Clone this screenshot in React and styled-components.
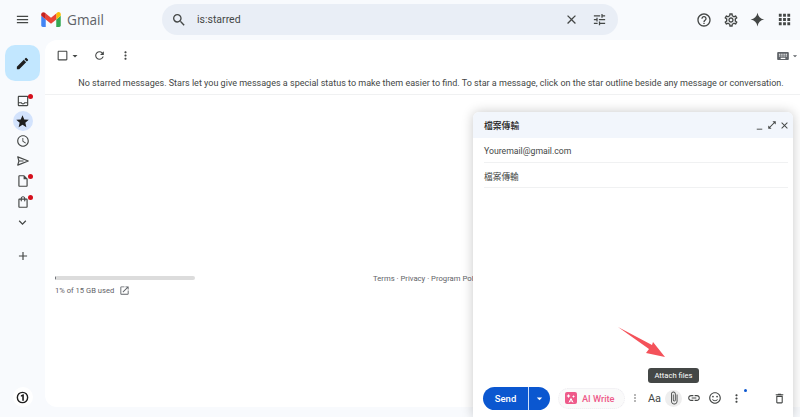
import React from 'react';
import styled, { createGlobalStyle } from 'styled-components';
import {
  MdMenu, MdSearch, MdClose, MdTune, MdOutlineHelpOutline, MdOutlineSettings, MdApps, MdEdit,
  MdOutlineInbox, MdStar, MdOutlineWatchLater, MdOutlineInsertDriveFile, MdExpandMore, MdAdd,
  MdCheckBoxOutlineBlank, MdArrowDropDown, MdRefresh, MdMoreVert, MdKeyboard, MdOutlineOpenInNew,
  MdOpenInFull, MdAttachFile, MdLink, MdOutlineSentimentSatisfied, MdOutlineDelete, MdOutlineShoppingBag, MdMinimize
} from 'react-icons/md';

const Global = createGlobalStyle`
  html, body { margin: 0; padding: 0; height: 100%; overflow: hidden; background: #f8fafd; }
  #root { height: 100%; }
  * { box-sizing: border-box; }
`;

const Page = styled.div`
  position: relative;
  width: 800px;
  height: 417px;
  overflow: hidden;
  display: flex;
  flex-direction: column;
  font-family: Roboto, "Noto Sans CJK TC", sans-serif;
  color: #444746;
  background: #f8fafd;
`;

const Header = styled.header`
  height: 40px;
  flex: none;
  display: flex;
  align-items: center;
  padding-bottom: 1px;
`;

const Brand = styled.div`
  width: 162px;
  flex: none;
  display: flex;
  align-items: center;
  padding-left: 15px;
  color: #444746;
`;

const Logo = styled.svg`
  width: 20px;
  height: 15px;
  margin-left: 11px;
`;

const Wordmark = styled.span`
  font-family: "Open Sans", Roboto, sans-serif;
  font-size: 13.6px;
  margin-left: 6px;
  color: #5f6368;
`;

const Search = styled.div`
  width: 456px;
  height: 31px;
  flex: none;
  border-radius: 16px;
  background: #e9eef6;
  display: flex;
  align-items: center;
  padding: 0 11px 0 9px;
  font-size: 10.5px;
  color: #444746;
`;

const SearchText = styled.span`
  flex: 1;
  margin-left: 10px;
`;

const SearchAction = styled.span`
  display: flex;
  margin-left: 13px;
`;

const HeaderActions = styled.div`
  flex: 1;
  display: flex;
  justify-content: flex-end;
  align-items: center;
  gap: 11px;
  padding-right: 7px;
  color: #444746;
`;

const Body = styled.div`
  flex: 1;
  display: flex;
  min-height: 0;
`;

const Rail = styled.nav`
  width: 45px;
  flex: none;
  display: flex;
  flex-direction: column;
  align-items: center;
  padding: 5px 0 10px;
`;

const ComposeButton = styled.div`
  width: 35px;
  height: 36px;
  border-radius: 10px;
  background: #c2e7ff;
  display: flex;
  align-items: center;
  justify-content: center;
  color: #1f1f1f;
  margin-bottom: 10px;
`;

const RailItem = styled.div`
  position: relative;
  width: 20px;
  height: 20px;
  border-radius: 50%;
  display: flex;
  align-items: center;
  justify-content: center;
  color: #444746;
  background: ${p => (p.$active ? '#d3e3fd' : 'transparent')};
  margin-bottom: ${p => p.$gap || 0}px;
`;

const Dot = styled.span`
  position: absolute;
  top: 3px;
  right: -0.5px;
  width: 5px;
  height: 5px;
  border-radius: 50%;
  background: #d50f1c;
`;

const AccountBadge = styled.div`
  width: 20px;
  height: 20px;
  border-radius: 50%;
  background: #fff;
  display: flex;
  align-items: center;
  justify-content: center;
`;

const RailBottom = styled.div`
  flex: 1;
  display: flex;
  flex-direction: column;
  justify-content: flex-end;
`;

const Main = styled.main`
  flex: 1;
  height: 367px;
  background: #fff;
  border-radius: 12px 0 0 12px;
  display: flex;
  flex-direction: column;
  min-width: 0;
`;

const Toolbar = styled.div`
  height: 31px;
  flex: none;
  display: flex;
  align-items: center;
  padding-left: 11px;
  color: #444746;
`;

const ToolbarIcon = styled.span`
  display: flex;
  margin-right: ${p => p.$mr || 0}px;
`;

const Keyboard = styled.span`
  margin-left: auto;
  display: flex;
  align-items: center;
  color: #5f6368;
`;

const Notice = styled.div`
  height: 24px;
  flex: none;
  border-bottom: 1px solid #f0f1f2;
  display: flex;
  justify-content: center;
  font-size: 9.03px;
  line-height: 25px;
  white-space: nowrap;
  color: #444746;
  padding-left: 17px;
`;

const Footer = styled.div`
  margin-top: 181px;
  padding-left: 10px;
  display: flex;
`;

const Storage = styled.div`
  width: 140px;
  flex: none;
`;

const Bar = styled.div`
  height: 4px;
  border-radius: 2px;
  background: #dcdcdc;
  overflow: hidden;
`;

const BarFill = styled.div`
  height: 100%;
  background: #5f6368;
`;

const StorageText = styled.div`
  margin-top: 5px;
  display: flex;
  align-items: center;
  gap: 5px;
  font-size: 7.6px;
  color: #5f6368;
`;

const Links = styled.div`
  margin-left: 178px;
  margin-top: -2px;
  font-size: 7.7px;
  color: #5f6368;
  white-space: nowrap;
`;

const Compose = styled.section`
  position: absolute;
  left: 473px;
  top: 112px;
  width: 320px;
  height: 305px;
  background: #fff;
  border-radius: 6px 6px 0 0;
  box-shadow: 0 0 12px rgba(0, 0, 0, 0.22);
  display: flex;
  flex-direction: column;
`;

const ComposeHeader = styled.div`
  height: 26px;
  flex: none;
  background: #f2f6fc;
  border-radius: 6px 6px 0 0;
  display: flex;
  align-items: center;
  padding: 0 3px 0 11px;
  font-size: 8.8px;
  font-weight: 500;
  color: #1f1f1f;
`;

const ComposeTitle = styled.span`
  flex: 1;
`;

const WindowButtons = styled.div`
  display: flex;
  gap: 2px;
  color: #444746;
`;

const Field = styled.div`
  height: 25px;
  flex: none;
  margin: 0 5px 0 11px;
  padding-top: 2px;
  border-bottom: 1px solid #f0f1f2;
  display: flex;
  align-items: center;
  font-size: 8.7px;
  color: #444746;
`;

const EditorSpace = styled.div`
  flex: 1;
`;

const ComposeToolbar = styled.div`
  height: 38px;
  flex: none;
  padding-left: 10px;
  display: flex;
  align-items: center;
  color: #444746;
`;

const SendGroup = styled.div`
  width: 67px;
  height: 23px;
  flex: none;
  border-radius: 12px;
  background: #0b57d0;
  color: #fff;
  display: flex;
  align-items: center;
  font-size: 9.5px;
  font-weight: 500;
`;

const SendLabel = styled.span`
  width: 46px;
  height: 100%;
  display: flex;
  align-items: center;
  justify-content: center;
  border-right: 1px solid #cfe0fa;
`;

const SendArrow = styled.span`
  flex: 1;
  display: flex;
  justify-content: center;
`;

const AiWrite = styled.div`
  width: 67px;
  height: 21px;
  margin-left: 8px;
  flex: none;
  border-radius: 11px;
  background: #fafafa;
  border: 1px dotted #eceaf0;
  display: flex;
  align-items: center;
  padding-left: 6px;
  gap: 5px;
  font-size: 9.2px;
  font-weight: 500;
  color: #ee5a8a;
  white-space: nowrap;
`;

const AiIcon = styled.svg`
  width: 12px;
  height: 12px;
  flex: none;
`;

const ToolButton = styled.span`
  position: relative;
  width: 17px;
  height: 17px;
  flex: none;
  border-radius: 50%;
  display: flex;
  align-items: center;
  justify-content: center;
  font-size: 11px;
  margin-left: ${p => p.$ml ?? 4}px;
  background: ${p => (p.$active ? '#eeeeee' : 'transparent')};
`;

const BlueDot = styled.span`
  position: absolute;
  top: -1px;
  right: -2px;
  width: 3.5px;
  height: 3.5px;
  border-radius: 50%;
  background: #0b57d0;
`;

const Tooltip = styled.div`
  position: absolute;
  left: 648px;
  top: 368px;
  width: 51px;
  height: 15px;
  background: #444746;
  color: #fff;
  border-radius: 3px;
  font-size: 7.6px;
  display: flex;
  align-items: center;
  justify-content: center;
  white-space: nowrap;
`;

const Arrow = styled.svg`
  position: absolute;
  left: 615px;
  top: 325px;
  width: 52px;
  height: 36px;
`;

const Gemini = () => (
  <svg width="15" height="15" viewBox="0 0 24 24"><path fill="#444746" d="M12 1c1 6 5 10 11 11-6 1-10 5-11 11-1-6-5-10-11-11 6-1 10-5 11-11z" /></svg>
);

const GmailLogo = () => (
  <Logo viewBox="0 0 52 40">
    <path fill="#4285f4" d="M4 40h8V20L0 10v26c0 2 2 4 4 4z" />
    <path fill="#34a853" d="M40 40h8c2 0 4-2 4-4V10L40 20z" />
    <path fill="#fbbc04" d="M40 4v16l12-10V6c0-5-6-8-10-4z" />
    <path fill="#ea4335" d="M12 20V4l14 11L40 4v16L26 31z" />
    <path fill="#c5221f" d="M0 6v4l12 10V4L10 2C6-1 0 1 0 6z" />
  </Logo>
);

const SendOutline = ({ size }) => (
  <svg width={size} height={size} viewBox="0 0 24 24" fill="none" stroke="#444746" strokeWidth="2" strokeLinejoin="round">
    <path d="M3 5l18 7-18 7 2-7-2-7zM5 12h8" />
  </svg>
);

const One = () => (
  <svg width="13" height="13" viewBox="0 0 24 24">
    <circle cx="12" cy="12" r="9.5" fill="none" stroke="#1f1f1f" strokeWidth="2.6" />
    <path fill="#1f1f1f" d="M9 8l4-2h1.5v12h-3V9.5L9 10.5z" />
  </svg>
);

const rail = [
  { Icon: MdOutlineInbox, dot: true },
  { Icon: MdStar, active: true, color: '#1f1f1f' },
  { Icon: MdOutlineWatchLater },
  { Icon: SendOutline },
  { Icon: MdOutlineInsertDriveFile, dot: true, gap: 1 },
  { Icon: MdOutlineShoppingBag, dot: true },
  { Icon: MdExpandMore, gap: 14 },
  { Icon: MdAdd }
];

export default function App() {
  return (
    <Page>
      <Global />
      <Header>
        <Brand>
          <MdMenu size={15} />
          <GmailLogo />
          <Wordmark>Gmail</Wordmark>
        </Brand>
        <Search>
          <MdSearch size={16} />
          <SearchText>is:starred</SearchText>
          <SearchAction><MdClose size={15} /></SearchAction>
          <SearchAction><MdTune size={15} /></SearchAction>
        </Search>
        <HeaderActions>
          <MdOutlineHelpOutline size={16} />
          <MdOutlineSettings size={16} />
          <Gemini />
          <MdApps size={17} />
        </HeaderActions>
      </Header>
      <Body>
        <Rail>
          <ComposeButton><MdEdit size={15} /></ComposeButton>
          {rail.map(({ Icon, dot, active, gap, color }, i) => (
            <RailItem key={i} $active={active} $gap={gap}>
              <Icon size={active || gap === 14 ? 15 : 14} color={color} />
              {dot && <Dot />}
            </RailItem>
          ))}
          <RailBottom>
            <AccountBadge><One /></AccountBadge>
          </RailBottom>
        </Rail>
        <Main>
          <Toolbar>
            <ToolbarIcon><MdCheckBoxOutlineBlank size={13} /></ToolbarIcon>
            <ToolbarIcon $mr={12}><MdArrowDropDown size={12} /></ToolbarIcon>
            <ToolbarIcon $mr={13}><MdRefresh size={13} /></ToolbarIcon>
            <ToolbarIcon><MdMoreVert size={13} /></ToolbarIcon>
            <Keyboard>
              <MdKeyboard size={14} />
              <MdArrowDropDown size={10} />
            </Keyboard>
          </Toolbar>
          <Notice>
            No starred messages. Stars let you give messages a special status to make them easier to find. To star a message, click on the star outline beside any message or conversation.
          </Notice>
          <Footer>
            <Storage>
              <Bar><BarFill style={{ width: '1%' }} /></Bar>
              <StorageText>1% of 15 GB used <MdOutlineOpenInNew size={11} /></StorageText>
            </Storage>
            <Links>Terms · Privacy · Program Policies</Links>
          </Footer>
        </Main>
      </Body>
      <Compose>
        <ComposeHeader>
          <ComposeTitle>檔案傳輸</ComposeTitle>
          <WindowButtons>
            <MdMinimize size={11} />
            <MdOpenInFull size={10} />
            <MdClose size={11} />
          </WindowButtons>
        </ComposeHeader>
        <Field>Youremail@gmail.com</Field>
        <Field>檔案傳輸</Field>
        <EditorSpace />
        <ComposeToolbar>
          <SendGroup>
            <SendLabel>Send</SendLabel>
            <SendArrow><MdArrowDropDown size={13} /></SendArrow>
          </SendGroup>
          <AiWrite>
            <AiIcon viewBox="0 0 12 12">
              <rect width="12" height="12" rx="2" fill="#ee5a8a" />
              <path d="M3.5 2l.7 1.3L5.5 4l-1.3.7L3.5 6l-.7-1.3L1.500 4l1.300-.7zM8.500 3l.5 1 1 .5-1 .5-.5 1-.5-1-1-.5 1-.5z" fill="#fff" />
              <path d="M4 10.500l2-4 2 4M5 9h2" fill="none" stroke="#fff" strokeWidth="1" />
            </AiIcon>
            AI Write
          </AiWrite>
          <ToolButton $ml={1}><MdMoreVert size={12} color="#a8a8a8" /></ToolButton>
          <ToolButton $ml={3}>Aa</ToolButton>
          <ToolButton $ml={2} $active><MdAttachFile size={14} /></ToolButton>
          <ToolButton $ml={3}><MdLink size={14} /></ToolButton>
          <ToolButton><MdOutlineSentimentSatisfied size={14} /></ToolButton>
          <ToolButton $ml={5}><MdMoreVert size={13} /><BlueDot /></ToolButton>
          <ToolButton $ml={26}><MdOutlineDelete size={13} /></ToolButton>
        </ComposeToolbar>
      </Compose>
      <Arrow viewBox="0 0 52 36">
        <path fill="#f4525a" d="M3 2 L37 20 L38 17 L50 32 L31 28 L34 24 Z" />
      </Arrow>
      <Tooltip>Attach files</Tooltip>
    </Page>
  );
}
